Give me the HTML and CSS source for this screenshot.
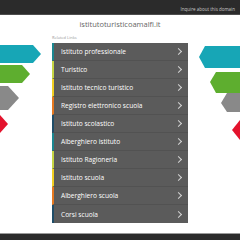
FILE: index.html
```html
<!DOCTYPE html>
<html lang="it">
<head>
    <meta charset="UTF-8">
    <meta name="viewport" content="width=device-width, initial-scale=1.0">
    <title>istitutoturisticoamalfi.it</title>
    <link rel="stylesheet" href="styles.css">
</head>
<body>
    <div class="topbar">
        <a href="#" class="inquire">Inquire about this domain</a>
    </div>

    <h1 class="domain">istitutoturisticoamalfi.it</h1>

    <div class="main">
        <svg class="deco" width="52" height="110" viewBox="0 0 52 110">
            <polygon points="0,11 33,11 41,20 33,29 0,29" fill="#17a6b6"></polygon>
            <polygon points="0,31 22,31 30,40 22,49 0,49" fill="#5eae2f"></polygon>
            <polygon points="0,52 8,52 19,64 8,76 0,76" fill="#898989"></polygon>
            <polygon points="0,81 8,90 0,99" fill="#e3132d"></polygon>
        </svg>

        <div class="links">
            <div class="links-title">Related Links</div>
            <ul class="link-list">
                <li class="c1"><a href="#">Istituto professionale</a></li>
                <li class="c2"><a href="#">Turistico</a></li>
                <li class="c3"><a href="#">Istituto tecnico turistico</a></li>
                <li class="c4"><a href="#">Registro elettronico scuola</a></li>
                <li class="c5"><a href="#">Istituto scolastico</a></li>
                <li class="c1"><a href="#">Alberghiero istituto</a></li>
                <li class="c2"><a href="#">Istituto Ragioneria</a></li>
                <li class="c3"><a href="#">Istituto scuola</a></li>
                <li class="c4"><a href="#">Alberghiero scuola</a></li>
                <li class="c5"><a href="#">Corsi scuola</a></li>
            </ul>
        </div>

        <svg class="deco" width="52" height="110" viewBox="0 0 52 110">
            <polygon points="52,12 17,12 11,23 17,34 52,34" fill="#17a6b6"></polygon>
            <polygon points="52,38 28,38 22,48 28,59 52,59" fill="#5eae2f"></polygon>
            <polygon points="52,59 39,59 33,69 39,78 52,78" fill="#898989"></polygon>
            <polygon points="52,86 44,96 52,106" fill="#e3132d"></polygon>
        </svg>
    </div>

    <div class="footer"></div>
</body>
</html>
```

FILE: styles.css
```css
* {
    margin: 0;
    padding: 0;
    box-sizing: border-box;
}

body {
    height: 240px;
    display: flex;
    flex-direction: column;
    background: #fff;
    font-family: "Open Sans", sans-serif;
    overflow: hidden;
}

.topbar {
    height: 15px;
    background: #2b2b2b;
    border-bottom: 1px solid #4d4d4d;
    display: flex;
    justify-content: flex-end;
    align-items: flex-end;
    padding: 0 5px 2px 0;
}

.inquire {
    color: #c8c8c8;
    font-size: 4.5px;
    line-height: 6px;
    text-decoration: none;
}

.domain {
    height: 19px;
    line-height: 19px;
    text-align: center;
    font-size: 7.5px;
    font-weight: 400;
    color: #666;
}

.main {
    display: flex;
}

.deco {
    flex: none;
    display: block;
}

.links {
    width: 136px;
}

.links-title {
    font-size: 4px;
    line-height: 8px;
    color: #999;
    margin-bottom: 1px;
}

.link-list {
    list-style: none;
    background: #5b5b5b;
}

.link-list li {
    height: 18px;
    border-left: 2px solid;
    border-bottom: 1px solid #525252;
}

.link-list li:last-child {
    border-bottom: none;
}

.link-list a {
    height: 100%;
    display: flex;
    align-items: center;
    justify-content: space-between;
    padding: 0 7px 0 7px;
    color: #fff;
    font-size: 6.6px;
    text-decoration: none;
}

.link-list a::after {
    content: "";
    width: 4px;
    height: 4px;
    border-top: 1px solid #d4d4d4;
    border-right: 1px solid #d4d4d4;
    transform: rotate(45deg);
}

.c1 { border-left-color: #1b8790 !important; }
.c2 { border-left-color: #c6d543 !important; }
.c3 { border-left-color: #f1cf22 !important; }
.c4 { border-left-color: #e6781f !important; }
.c5 { border-left-color: #1f4d68 !important; }

.footer {
    margin-top: auto;
    height: 7px;
    background: #2b2b2b;
    border-top: 1px solid #9a9a9a;
}
```
